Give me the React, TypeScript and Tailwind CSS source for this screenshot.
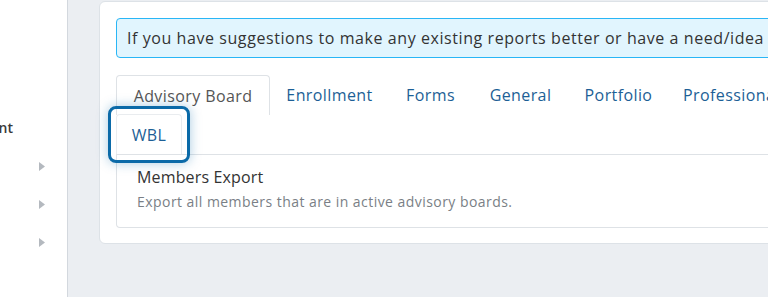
import React from 'react';

const tabs = [
  { label: 'Advisory Board', w: 'w-[154px]' },
  { label: 'Enrollment', w: 'w-[119px]' },
  { label: 'Forms', w: 'w-[83px]' },
  { label: 'General', w: 'w-[97px]' },
  { label: 'Portfolio', w: 'w-[99px]' },
  { label: 'Professional Development', w: 'w-[236px]' },
];

function Caret() {
  return (
    <svg width="6" height="9" viewBox="0 0 6 9" className="fill-[#b4b9bf]">
      <path d="M0 0 L6 4.5 L0 9 Z" />
    </svg>
  );
}

export default function App() {
  return (
    <div className="w-[768px] h-[297px] overflow-hidden flex bg-[#ebeef2] text-[#333]" style={{ fontFamily: '"Open Sans", "Liberation Sans", sans-serif' }}>
      {/* sidebar */}
      <aside className="w-[68px] shrink-0 bg-white border-r border-[#d3d8de] flex flex-col items-end overflow-hidden">
        <div className="mt-[118px] w-[68px] flex justify-end">
          <span className="text-[14px] font-semibold text-[#3a3a3a] mr-[54px] whitespace-nowrap leading-5">Management</span>
        </div>
        <div className="mt-[24px] w-full flex flex-col items-start pl-[39px] gap-[29px]">
          <Caret />
          <Caret />
          <Caret />
        </div>
      </aside>

      {/* main */}
      <main className="flex-1 pl-[31px] pt-[1px]">
        <div className="w-[1000px] bg-white border border-[#dde2e7] rounded-md p-4 pb-[15px]">
          <div className="h-10 flex items-center px-[10px] bg-[#e1f5fe] border border-[#29b6f6] rounded text-[16px] tracking-[0.57px] text-[#333] whitespace-nowrap">
            If you have suggestions to make any existing reports better or have a need/idea for a new report, let us know.
          </div>

          <div className="mt-[17px] w-[800px] flex flex-wrap border-b border-[#dee2e6] text-[16px] tracking-[0.4px]">
            {tabs.map((t, i) => (
              <div
                key={t.label}
                className={
                  i === 0
                    ? `${t.w} h-10 flex items-center justify-center bg-white border border-b-0 border-[#dee2e6] rounded-t text-[#555] whitespace-nowrap`
                    : `${t.w} h-10 flex items-center justify-center border border-transparent text-[#1d5f96] whitespace-nowrap`
                }
              >
                {t.label}
              </div>
            ))}
            <div className="relative -mt-px w-[66px] h-10 flex items-center justify-center border border-b-0 border-[#e9ecef] rounded-t text-[#1d5f96]">
              WBL
              <span className="absolute -inset-[9px] rounded-lg border-[3px] border-[#0b6aa8] shadow-[0_0_12px_rgba(11,106,168,0.35)] pointer-events-none" />
            </div>
          </div>

          <div className="h-[73px] border border-t-0 border-[#dee2e6] rounded-b px-5 pt-[10px]">
            <div className="text-[16px] tracking-[0.15px] text-[#333] leading-6">Members Export</div>
            <div className="text-[14px] tracking-[0.45px] text-[#7a7f86] leading-5 mt-[3px]">Export all members that are in active advisory boards.</div>
          </div>
        </div>
      </main>
    </div>
  );
}
